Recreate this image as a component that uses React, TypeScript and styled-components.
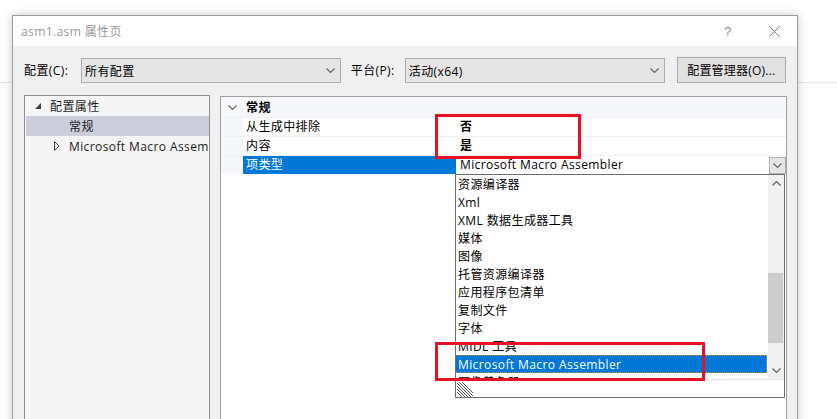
import * as React from 'react';
import styled, { createGlobalStyle } from 'styled-components';

const GlobalStyle = createGlobalStyle`
  html, body {
    margin: 0;
    padding: 0;
    background: #fff;
    overflow: hidden;
  }
  body {
    font-family: "Open Sans", "Noto Sans CJK SC", sans-serif;
    font-size: 12px;
    letter-spacing: 0.4px;
    color: #000;
  }
`;

const Desktop = styled.div`
  position: relative;
  width: 837px;
  height: 419px;
  overflow: hidden;
  box-sizing: border-box;
  padding: 15px 0 0 12px;
  background: linear-gradient(#fff 82px, #e6e6ea 82px, #e6e6ea 83px, #fff 83px);
`;

const Dialog = styled.div`
  width: 786px;
  height: 440px;
  box-sizing: border-box;
  border: 1px solid #9c9c9c;
  background: #f0f0f0;
  box-shadow: 0 0 9px rgba(0, 0, 0, 0.22);
  display: flex;
  flex-direction: column;
`;

const TitleBar = styled.div`
  height: 30px;
  background: #fff;
  display: flex;
  align-items: center;
  padding-left: 8px;
`;

const Title = styled.div`
  flex: 1;
  color: #999;
  font-size: 12px;
`;

const TitleButton = styled.div`
  width: 46px;
  height: 30px;
  display: flex;
  align-items: center;
  justify-content: center;
  color: #8a8a8a;
  font-size: 13px;
  font-family: "Liberation Sans", sans-serif;
`;

const Toolbar = styled.div`
  display: flex;
  align-items: center;
  padding: 12px 11px 12px 11px;
  height: 25px;
`;

const Label = styled.div<{ $w: number }>`
  width: ${p => p.$w}px;
  flex: none;
  line-height: 25px;
`;

const Combo = styled.div`
  width: 261px;
  height: 25px;
  box-sizing: border-box;
  border: 1px solid #adadad;
  background: #e5e5e5;
  display: flex;
  align-items: center;
  padding: 0 5px 0 3px;
  margin-right: 10px;
`;

const ComboText = styled.div`
  flex: 1;
`;

const Button = styled.div`
  width: 110px;
  height: 26px;
  margin-top: -1px;
  margin-left: 2px;
  box-sizing: border-box;
  border: 1px solid #adadad;
  background: #e1e1e1;
  display: flex;
  align-items: center;
  justify-content: center;
  letter-spacing: 0.2px;
`;

const Content = styled.div`
  flex: 1;
  display: flex;
  align-items: flex-start;
  gap: 10px;
  padding: 0 10px 0 11px;
`;

const Tree = styled.div`
  width: 186px;
  height: 340px;
  box-sizing: border-box;
  border: 1px solid #8e8f95;
  background: #f5f5f5;
  overflow: hidden;
`;

const TreeRow = styled.div<{ $indent: number; $selected?: boolean }>`
  height: 20px;
  display: flex;
  align-items: center;
  margin-left: 1px;
  padding-left: ${p => p.$indent}px;
  background: ${p => (p.$selected ? '#cccedb' : 'transparent')};
  color: #1e1e1e;
  white-space: nowrap;
`;

const Expander = styled.div`
  width: 14px;
  margin-right: 5px;
  flex: none;
  display: flex;
  align-items: center;
  justify-content: center;
`;

const Grid = styled.div`
  position: relative;
  width: 567px;
  height: 340px;
  margin-top: 1px;
  box-sizing: border-box;
  border: 1px solid #a0a0a0;
  background: #fff;
`;

const CategoryRow = styled.div`
  height: 20px;
  display: flex;
  align-items: center;
  background: #f5f7fa;
  font-weight: bold;
`;

const CategoryName = styled.span`
  padding-left: 3px;
`;

const Gutter = styled.div`
  width: 22px;
  align-self: stretch;
  flex: none;
  background: #f5f7fa;
  display: flex;
  align-items: center;
  justify-content: center;
`;

const PropRow = styled.div`
  height: 19px;
  display: flex;
  box-sizing: border-box;
  border-top: 1px solid #eef0f4;
`;

const NameCell = styled.div<{ $selected?: boolean }>`
  width: 213px;
  flex: none;
  padding-left: 3px;
  box-sizing: border-box;
  line-height: 18px;
  background: ${p => (p.$selected ? '#0078d7' : '#fff')};
  color: ${p => (p.$selected ? '#fff' : '#000')};
`;

const ValueCell = styled.div<{ $bold?: boolean }>`
  flex: 1;
  display: flex;
  align-items: center;
  padding-left: 4px;
  line-height: 18px;
  font-weight: ${p => (p.$bold ? 'bold' : 'normal')};
`;

const ValueText = styled.span`
  flex: 1;
`;

const DropButton = styled.div`
  width: 17px;
  height: 17px;
  box-sizing: border-box;
  border: 1px solid #adadad;
  background: #e5e5e5;
  display: flex;
  align-items: center;
  justify-content: center;
`;

const DropList = styled.div`
  position: absolute;
  left: 234px;
  top: 77px;
  width: 330px;
  height: 224px;
  box-sizing: border-box;
  border: 1px solid #6e6e6e;
  background: #fff;
  display: flex;
  flex-direction: column;
`;

const ListBody = styled.div`
  height: 204px;
  display: flex;
`;

const Items = styled.div`
  flex: 1;
  overflow: hidden;
`;

const Item = styled.div<{ $selected?: boolean }>`
  height: 18px;
  line-height: 18px;
  box-sizing: border-box;
  padding-left: 2px;
  white-space: nowrap;
  border: 1px dotted ${p => (p.$selected ? '#d9922e' : 'transparent')};
  border-left: none;
  background: ${p => (p.$selected ? '#0078d7' : '#fff')};
  color: ${p => (p.$selected ? '#fff' : '#000')};
  margin-right: 1px;
`;

const ScrollBar = styled.div`
  width: 16px;
  flex: none;
  background: #f0f0f0;
  display: flex;
  flex-direction: column;
`;

const ScrollArrow = styled.div`
  height: 17px;
  display: flex;
  align-items: center;
  justify-content: center;
`;

const Track = styled.div`
  flex: 1;
`;

const Thumb = styled.div`
  margin: 81px 1px 0 0;
  height: 70px;
  background: #cdcdcd;
`;

const Grip = styled.div`
  flex: 1;
  border-top: 1px solid #e3e3e3;
  display: flex;
  align-items: flex-end;
  padding: 0 0 0 1px;
`;

const Annotation = styled.div`
  position: absolute;
  box-sizing: border-box;
  border: 3px solid #e81123;
`;

const Chevron = ({ up }: { up?: boolean }) => (
  <svg width="9" height="5" viewBox="0 0 9 5">
    <polyline
      points={up ? '0.5,4.5 4.5,0.5 8.5,4.5' : '0.5,0.5 4.5,4.5 8.5,0.5'}
      fill="none"
      stroke="#606060"
      strokeWidth="1.1"
    />
  </svg>
);

const items = [
  '资源编译器',
  'Xml',
  'XML 数据生成器工具',
  '媒体',
  '图像',
  '托管资源编译器',
  '应用程序包清单',
  '复制文件',
  '字体',
  'MIDL 工具',
  'Microsoft Macro Assembler',
  '图像着色器',
];

export default function App() {
  return (
    <Desktop>
      <GlobalStyle />
      <Dialog>
        <TitleBar>
          <Title>asm1.asm 属性页</Title>
          <TitleButton>?</TitleButton>
          <TitleButton>
            <svg width="11" height="11" viewBox="0 0 11 11">
              <path d="M0.5 0.5 L10.5 10.5 M10.5 0.5 L0.5 10.5" stroke="#7a7a7a" strokeWidth="1" />
            </svg>
          </TitleButton>
        </TitleBar>
        <Toolbar>
          <Label $w={57}>配置(C):</Label>
          <Combo>
            <ComboText>所有配置</ComboText>
            <Chevron />
          </Combo>
          <Label $w={54}>平台(P):</Label>
          <Combo>
            <ComboText>活动(x64)</ComboText>
            <Chevron />
          </Combo>
          <Button>配置管理器(O)...</Button>
        </Toolbar>
        <Content>
          <Tree>
            <TreeRow $indent={5}>
              <Expander>
                <svg width="6" height="6" viewBox="0 0 6 6">
                  <polygon points="6,0 6,6 0,6" fill="#404040" />
                </svg>
              </Expander>
              配置属性
            </TreeRow>
            <TreeRow $indent={24} $selected>
              <Expander />
              常规
            </TreeRow>
            <TreeRow $indent={24}>
              <Expander>
                <svg width="6" height="10" viewBox="0 0 6 10">
                  <polygon points="0.5,0.5 5,5 0.5,9.5" fill="none" stroke="#404040" strokeWidth="1" />
                </svg>
              </Expander>
              Microsoft Macro Assembler
            </TreeRow>
          </Tree>
          <Grid>
            <CategoryRow>
              <Gutter>
                <Chevron />
              </Gutter>
              <CategoryName>常规</CategoryName>
            </CategoryRow>
            <PropRow>
              <Gutter />
              <NameCell>从生成中排除</NameCell>
              <ValueCell $bold>否</ValueCell>
            </PropRow>
            <PropRow>
              <Gutter />
              <NameCell>内容</NameCell>
              <ValueCell $bold>是</ValueCell>
            </PropRow>
            <PropRow>
              <Gutter />
              <NameCell $selected>项类型</NameCell>
              <ValueCell>
                <ValueText>Microsoft Macro Assembler</ValueText>
                <DropButton>
                  <Chevron />
                </DropButton>
              </ValueCell>
            </PropRow>
            <DropList>
              <ListBody>
                <Items>
                  {items.map((t, i) => (
                    <Item key={i} $selected={i === 10}>
                      {t}
                    </Item>
                  ))}
                </Items>
                <ScrollBar>
                  <ScrollArrow>
                    <Chevron up />
                  </ScrollArrow>
                  <Track>
                    <Thumb />
                  </Track>
                  <ScrollArrow>
                    <Chevron />
                  </ScrollArrow>
                </ScrollBar>
              </ListBody>
              <Grip>
                <svg width="16" height="15" viewBox="0 0 16 15">
                  <path
                    d="M0 1 L14 15 M0 4 L11 15 M0 7 L8 15 M0 10 L5 15 M2 0 L16 14 M5 0 L16 11"
                    stroke="#555"
                    strokeWidth="1"
                  />
                </svg>
              </Grip>
            </DropList>
          </Grid>
        </Content>
      </Dialog>
      <Annotation style={{ left: 435, top: 114, width: 146, height: 45 }} />
      <Annotation style={{ left: 435, top: 342, width: 270, height: 39 }} />
    </Desktop>
  );
}
